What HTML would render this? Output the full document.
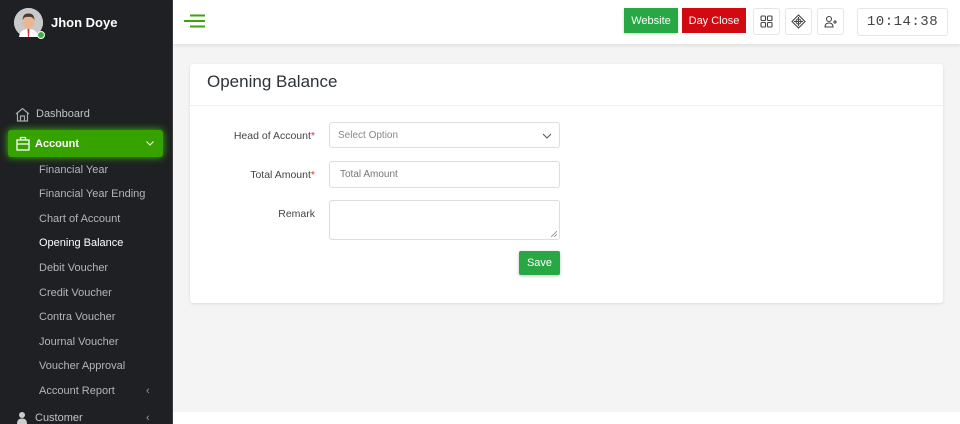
<!DOCTYPE html>
<html style="width:960px;height:424px;overflow:hidden"><head><meta charset="utf-8">
<style>
*{box-sizing:border-box;margin:0;padding:0}
body{width:960px;height:424px;overflow:hidden;font-family:"Liberation Sans",sans-serif;background:#f4f4f5;position:relative}
.sb{position:absolute;left:0;top:0;width:173px;height:424px;background:#1e2023;border-right:1px solid #3a3c3f}
.user{position:absolute;left:14px;top:8px;display:flex;align-items:center}
.av{width:29px;height:29px;border-radius:50%;background:#ccc;position:relative;overflow:visible}
.dot{position:absolute;right:-2px;bottom:-2px;width:8px;height:8px;border-radius:50%;background:#3cb33c;border:1.5px solid #fff}
.uname{color:#fff;font-weight:bold;font-size:13px;margin-left:8px}
.nav{position:absolute;left:0;width:173px;font-size:11px;color:#b9bcbf}
.item{position:absolute;left:0;width:173px;height:24px;display:flex;align-items:center}
.sub{padding-left:39px;color:#b3b6b9}
.act{position:absolute;left:8px;top:130px;width:155px;height:27px;background:#36a200;border-radius:3px;box-shadow:0 0 8px #3cbf10;color:#fff;font-weight:bold;font-size:11px;display:flex;align-items:center;padding-left:27px}
.hdr{position:absolute;left:173px;top:0;width:787px;height:44px;background:#fff;box-shadow:0 2px 3px rgba(0,0,0,.08)}
.btn{position:absolute;top:8px;height:25px;color:#fff;font-size:11px;display:flex;align-items:center;justify-content:center}
.ib{position:absolute;top:8px;width:27px;height:27px;border:1px solid #e6e6e6;border-radius:3px;background:#fff;display:flex;align-items:center;justify-content:center}
.card{position:absolute;left:190px;top:64px;width:753px;height:239px;background:#fff;border-radius:3px;box-shadow:0 1px 3px rgba(0,0,0,.1)}
.title{position:absolute;left:17px;top:8px;font-size:17px;color:#2d3238}
.line{position:absolute;left:0;top:41px;width:100%;height:1px;background:#eee}
.lbl{position:absolute;font-size:10.5px;color:#444;text-align:right;right:628px}
.lbl b{color:#d33;font-weight:normal}
.in{position:absolute;left:139px;width:231px;border:1px solid #ddd;border-radius:3px;font-size:10px;color:#888;padding-left:8px;display:flex;align-items:center}
</style></head><body>
<div class="sb">
 <div class="user"><div class="av"><svg width="29" height="29" viewBox="0 0 29 29"><circle cx="14.5" cy="14.5" r="14.5" fill="#c9c9c9"/><path d="M5 29 Q6 21 14.5 21 Q23 21 24 29Z" fill="#fff"/><path d="M13.5 21 h2 l-.5 8h-1z" fill="#c33"/><ellipse cx="14.5" cy="14" rx="6" ry="7" fill="#e8b896"/><path d="M8.5 12 Q9 5 14.5 5.5 Q20 5 20.5 12 Q18 8 14.5 9 Q11 8 8.5 12Z" fill="#4a3a30"/></svg><div class="dot"></div></div><div class="uname">Jhon Doye</div></div>
 <div class="nav">
  <div class="item" style="top:102px;padding-left:15px;color:#c1c4c7"><svg width="15" height="15" viewBox="0 0 15 15" fill="none" stroke="#aaa" stroke-width="1.2"><path d="M1 7 L7.5 1.5 L14 7 M2.5 6 V14 H12.5 V6 M5.5 14 V9 H9.5 V14"/></svg><span style="margin-left:6px">Dashboard</span></div>
 </div>
 <div class="act"><svg style="position:absolute;left:8px;top:6px" width="14" height="15" viewBox="0 0 14 15" fill="none" stroke="#fff" stroke-width="1.3"><rect x="1" y="4" width="12" height="10"/><path d="M4.5 4V1.5h5V4M1 8h12"/></svg>Account<svg style="position:absolute;right:9px;top:11px" width="8" height="5" viewBox="0 0 8 5" fill="none" stroke="#fff" stroke-width="1"><path d="M.5.5 4 4 7.5.5"/></svg></div>
 <div class="nav" style="top:0">
  <div class="item sub" style="top:158px">Financial Year</div>
  <div class="item sub" style="top:182px">Financial Year Ending</div>
  <div class="item sub" style="top:207px">Chart of Account</div>
  <div class="item sub" style="top:231px;color:#fff">Opening Balance</div>
  <div class="item sub" style="top:256px">Debit Voucher</div>
  <div class="item sub" style="top:281px">Credit Voucher</div>
  <div class="item sub" style="top:305px">Contra Voucher</div>
  <div class="item sub" style="top:330px">Journal Voucher</div>
  <div class="item sub" style="top:354px">Voucher Approval</div>
  <div class="item sub" style="top:379px">Account Report<span style="position:absolute;left:146px;color:#999">&lsaquo;</span></div>
  <div class="item" style="top:406px;padding-left:17px;color:#c1c4c7"><svg width="10" height="12" viewBox="0 0 10 12" fill="#ccc"><circle cx="5" cy="3" r="3"/><path d="M0 12 Q0 6.5 5 6.5 Q10 6.5 10 12Z"/></svg><span style="margin-left:8px">Customer</span><span style="position:absolute;left:146px;color:#999">&lsaquo;</span></div>
 </div>
</div>
<div class="hdr">
 <svg style="position:absolute;left:11px;top:14px" width="22" height="14" viewBox="0 0 22 14" stroke="#3aa60e" stroke-width="2"><path d="M6 1.5H21M0 7H21M6 12.5H21"/></svg>
 <div class="btn" style="left:451px;width:54px;background:#28a745;box-shadow:0 1px 3px rgba(0,0,0,.2)">Website</div>
 <div class="btn" style="left:509px;width:64px;background:#d10a11">Day Close</div>
 <div class="ib" style="left:580px"><svg width="13" height="13" viewBox="0 0 13 13" fill="none" stroke="#444" stroke-width="1.1"><rect x="1" y="1" width="4.5" height="4.5" rx="1"/><rect x="7.5" y="1" width="4.5" height="4.5" rx="1"/><rect x="1" y="7.5" width="4.5" height="4.5" rx="1"/><rect x="7.5" y="7.5" width="4.5" height="4.5" rx="1"/></svg></div>
 <div class="ib" style="left:612px"><svg width="15" height="15" viewBox="0 0 15 15" fill="none" stroke="#444" stroke-width="1.1"><path d="M7.5 1 L14 7.5 L7.5 14 L1 7.5Z"/><circle cx="7.5" cy="7.5" r="2.5"/><path d="M7.5 3v9M3 7.5h9"/></svg></div>
 <div class="ib" style="left:644px"><svg width="14" height="13" viewBox="0 0 14 13" fill="none" stroke="#444" stroke-width="1.1"><circle cx="5" cy="4" r="2.5"/><path d="M1 12 Q1 8 5 8 Q9 8 9 12Z M11 5v4M9 7h4"/></svg></div>
 <div class="ib" style="left:684px;width:91px;height:28px;font-family:'Liberation Mono',monospace;font-size:14px;color:#444;letter-spacing:0.5px">10:14:38</div>
</div>
<div class="card">
 <div class="title">Opening Balance</div>
 <div class="line"></div>
 <div class="lbl" style="top:66px">Head of Account<b>*</b></div>
 <div class="in" style="top:58px;height:26px">Select Option<svg style="position:absolute;right:7px;top:10px" width="10" height="6" viewBox="0 0 10 6" fill="none" stroke="#555" stroke-width="1"><path d="M1 1 5 5 9 1"/></svg></div>
 <div class="lbl" style="top:105px">Total Amount<b>*</b></div>
 <div class="in" style="top:97px;height:27px;padding-left:10px;color:#777">Total Amount</div>
 <div class="lbl" style="top:144px">Remark</div>
 <div class="in" style="top:136px;height:40px"><svg style="position:absolute;right:2px;bottom:2px" width="6" height="6" viewBox="0 0 6 6" stroke="#888" stroke-width=".8"><path d="M0 6L6 0M3 6L6 3"/></svg></div>
 <div class="btn" style="left:329px;top:187px;width:41px;height:24px;background:#28a745;border-radius:2px;box-shadow:0 1px 3px rgba(0,0,0,.25)">Save</div>
</div>
<div style="position:absolute;left:173px;top:412px;width:787px;height:12px;background:#fff"></div>
</body></html>
